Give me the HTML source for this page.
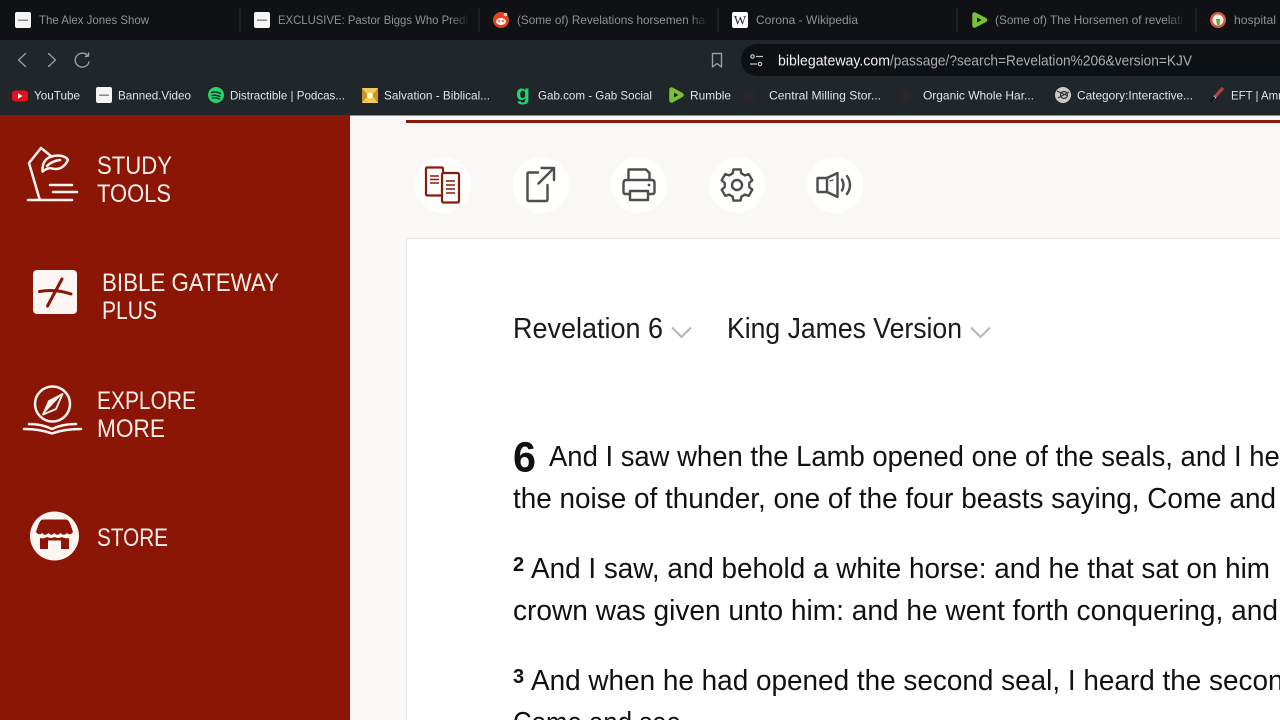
<!DOCTYPE html>
<html><head><meta charset="utf-8"><title>Revelation 6</title>
<style>
html,body{margin:0;padding:0;width:1280px;height:720px;overflow:hidden;background:#f9f8f6}
svg{display:block;position:absolute;left:0;top:0}
text{font-family:"Liberation Sans",sans-serif;white-space:pre}
.tab{font-size:12px;fill:#8f9194}
.bm{font-size:12px;fill:#e2e4e6}
.side{font-size:25px;fill:#fbeeea}
.sel{font-size:29px;fill:#1a1a1a}
.v{font-size:29px;fill:#111}
.ic{fill:none;stroke:#4d4d4d;stroke-width:2.4;stroke-linejoin:round;stroke-linecap:round}
.w{fill:none;stroke:#fdf3f0;stroke-width:2.5;stroke-linecap:round;stroke-linejoin:round}
</style></head>
<body>
<svg width="1280" height="720" viewBox="0 0 1280 720" xmlns="http://www.w3.org/2000/svg">
<defs>
<linearGradient id="f"><stop offset="0" stop-color="#0f1114" stop-opacity="0"/><stop offset="1" stop-color="#0f1114"/></linearGradient>
</defs>
<!-- chrome -->
<rect x="0" y="0" width="1280" height="40" fill="#0f1114"/>
<rect x="0" y="40" width="1280" height="75" fill="#202629"/>
<g stroke="#2b2e31" stroke-width="1">
<line x1="240" y1="8" x2="240" y2="32"/><line x1="479" y1="8" x2="479" y2="32"/><line x1="718" y1="8" x2="718" y2="32"/><line x1="957" y1="8" x2="957" y2="32"/><line x1="1196" y1="8" x2="1196" y2="32"/>
</g>
<!-- tab icons -->
<rect x="15" y="12" width="16" height="16" rx="2" fill="#f4f4f4"/><rect x="18" y="19.500" width="10" height="1.500" fill="#888"/>
<rect x="254" y="12" width="16" height="16" rx="2" fill="#f4f4f4"/><rect x="257" y="19.500" width="10" height="1.500" fill="#888"/>
<circle cx="501" cy="20" r="8" fill="#e0431f"/><path d="M495 27 L493.500 28 L497 26Z" fill="#e0431f"/><ellipse cx="501" cy="21.500" rx="5" ry="3.600" fill="#fbe9e4"/><circle cx="499" cy="21" r="0.900" fill="#e0431f"/><circle cx="503" cy="21" r="0.900" fill="#e0431f"/><circle cx="505.500" cy="14.500" r="1.800" fill="#f5c5b5"/>
<rect x="732" y="12" width="16" height="16" rx="2" fill="#fff"/>
<text x="740" y="24.500" text-anchor="middle" style="font-family:'Liberation Serif',serif;font-size:13px" fill="#222">W</text>
<path d="M974.500 14.500 L974.500 25.500 L985 20Z" fill="#79c034" stroke="#79c034" stroke-width="4.500" stroke-linejoin="round"/><path d="M977 17.500 L977 22.500 L981.500 20Z" fill="#0f1114"/>
<circle cx="1218" cy="20" r="8" fill="#d9573a"/><circle cx="1218" cy="20" r="5.500" fill="#f6efe8"/><path d="M1216 19 L1220 19 L1219.500 25 L1217 25Z" fill="#5fa94a"/>
<!-- tab text -->
<text class="tab" x="39" y="24" textLength="110" lengthAdjust="spacingAndGlyphs">The Alex Jones Show</text>
<text class="tab" x="278" y="24" textLength="190" lengthAdjust="spacingAndGlyphs">EXCLUSIVE: Pastor Biggs Who Predi</text>
<text class="tab" x="517" y="24" textLength="188" lengthAdjust="spacingAndGlyphs">(Some of) Revelations horsemen ha</text>
<text class="tab" x="756" y="24" textLength="102" lengthAdjust="spacingAndGlyphs">Corona - Wikipedia</text>
<text class="tab" x="995" y="24" textLength="188" lengthAdjust="spacingAndGlyphs">(Some of) The Horsemen of revelati</text>
<text class="tab" x="1234" y="24" textLength="42" lengthAdjust="spacingAndGlyphs">hospital</text>
<rect x="450" y="10" width="20" height="20" fill="url(#f)"/><rect x="688" y="10" width="20" height="20" fill="url(#f)"/><rect x="1166" y="10" width="20" height="20" fill="url(#f)"/>
<!-- nav -->
<g fill="none" stroke="#9a9fa2" stroke-width="1.400" stroke-linecap="round" stroke-linejoin="round">
<path d="M25.500 53.500 L18.500 60 L25.500 66.500"/>
<path d="M48.500 53.500 L55.500 60 L48.500 66.500"/>
<path d="M87.500 55.500 A7 7 0 1 0 89 62"/><path d="M85.500 56.500 L88.500 56 L88.500 53"/>
<path d="M712.500 53.500 H721.500 V67 L717 63.500 L712.500 67Z"/>
</g>
<!-- omnibox -->
<rect x="741" y="44" width="560" height="32" rx="16" fill="#0e1114"/>
<g fill="none" stroke="#c5c7c9" stroke-width="1.200">
<circle cx="752.500" cy="56.500" r="1.700"/><line x1="756" y1="56.500" x2="763" y2="56.500"/>
<circle cx="760" cy="64" r="1.700"/><line x1="750" y1="64" x2="757" y2="64"/>
</g>
<text x="778" y="65.500" fill="#f0f1f2" textLength="112" lengthAdjust="spacingAndGlyphs" style="font-size:14.500px">biblegateway.com</text>
<text x="890" y="65.500" fill="#a9adb0" textLength="302" lengthAdjust="spacingAndGlyphs" style="font-size:14.500px">/passage/?search=Revelation%206&amp;version=KJV</text>
<!-- bookmark icons -->
<rect x="12" y="90.500" width="16" height="11" rx="3" fill="#e3101a"/><path d="M18 93.300 L18 98.700 L22.500 96Z" fill="#fff"/>
<rect x="96" y="87" width="16" height="16" rx="2" fill="#f4f4f4"/><rect x="99" y="94.500" width="10" height="1.500" fill="#888"/>
<circle cx="216" cy="95" r="8" fill="#25d366"/><g fill="none" stroke="#123" stroke-width="1.300" stroke-linecap="round"><path d="M211.500 92.500 Q216 91 220.500 93.500"/><path d="M212 95.500 Q216 94.500 220 96.500"/><path d="M212.500 98 Q216 97.200 219.500 99"/></g>
<rect x="362" y="88" width="16" height="15" fill="#c9922a"/><path d="M362 88 L378 88 L372 95.500 L378 103 L362 103 L368 95.500Z" fill="#f0cb55"/><circle cx="370" cy="95.500" r="3" fill="#fff7d0"/>
<text x="516" y="100" style="font-size:21px;font-weight:bold" fill="#21d66f" textLength="14" lengthAdjust="spacingAndGlyphs">g</text>
<path d="M671.500 89.500 L671.500 100.500 L681.500 95Z" fill="#79c034" stroke="#79c034" stroke-width="4.500" stroke-linejoin="round"/><path d="M674 92.500 L674 97.500 L678.500 95Z" fill="#202629"/>
<circle cx="750" cy="96" r="6" fill="#2a2526"/><circle cx="905" cy="96" r="6" fill="#2a2526"/>
<circle cx="1063" cy="95" r="8" fill="#c9c9c9"/><g fill="none" stroke="#33383a" stroke-width="1.200"><path d="M1057 91 L1068 96"/><path d="M1058 98 L1069 92"/><circle cx="1064" cy="95" r="3.500"/></g>
<path d="M1211 101 L1222 89" stroke="#d8d8d8" stroke-width="3" stroke-linecap="round"/><path d="M1216 95.500 L1222 89" stroke="#b83a3a" stroke-width="3" stroke-linecap="round"/><path d="M1211 101 L1213.500 98" stroke="#111" stroke-width="3" stroke-linecap="round"/>
<!-- bookmark text -->
<text class="bm" x="34" y="99.500" textLength="46" lengthAdjust="spacingAndGlyphs">YouTube</text>
<text class="bm" x="118" y="99.500" textLength="73" lengthAdjust="spacingAndGlyphs">Banned.Video</text>
<text class="bm" x="230" y="99.500" textLength="115" lengthAdjust="spacingAndGlyphs">Distractible | Podcas...</text>
<text class="bm" x="384" y="99.500" textLength="106" lengthAdjust="spacingAndGlyphs">Salvation - Biblical...</text>
<text class="bm" x="538" y="99.500" textLength="114" lengthAdjust="spacingAndGlyphs">Gab.com - Gab Social</text>
<text class="bm" x="690" y="99.500" textLength="41" lengthAdjust="spacingAndGlyphs">Rumble</text>
<text class="bm" x="769" y="99.500" textLength="112" lengthAdjust="spacingAndGlyphs">Central Milling Stor...</text>
<text class="bm" x="923" y="99.500" textLength="111" lengthAdjust="spacingAndGlyphs">Organic Whole Har...</text>
<text class="bm" x="1077" y="99.500" textLength="116" lengthAdjust="spacingAndGlyphs">Category:Interactive...</text>
<text class="bm" x="1231" y="99.500" textLength="51" lengthAdjust="spacingAndGlyphs">EFT | Amr</text>
<!-- page -->
<rect x="0" y="115" width="1280" height="605" fill="#f9f8f6"/>
<rect x="350" y="115" width="930" height="1" fill="#8f8f8f"/>
<rect x="0" y="115" width="350" height="605" fill="#8b1605"/>
<rect x="406" y="120" width="874" height="3" fill="#8a1a0b"/>
<rect x="406.500" y="238.500" width="900" height="500" fill="#fff" stroke="#e4e4e2"/>
<!-- sidebar icons -->
<g class="w">
<path d="M28 200 H72"/><path d="M50 185 H72"/><path d="M53 192 H77"/>
<path d="M39.500 199 L29 163 L41 148 L51 156"/>
<path d="M42.500 171.500 Q41.500 156 58 155.500 Q66 156 68 160 Q62 172 50 168 Q45.500 169 42.500 171.500Z"/>
<path d="M47 166 Q52 161 60 160"/>
</g>
<rect x="33" y="270" width="44" height="44" rx="4" fill="#fdf6f3"/>
<path d="M39.500 291.500 Q55 288.500 71 294" fill="none" stroke="#8b1605" stroke-width="3" stroke-linecap="round"/>
<path d="M62 279 Q55 292 47.500 306" fill="none" stroke="#8b1605" stroke-width="3" stroke-linecap="round"/>
<circle cx="52.500" cy="404" r="17.500" class="w"/>
<path d="M62.500 394 L56 409 L43 414.500 L49 401Z" fill="none" stroke="#fdf3f0" stroke-width="1.800" stroke-linejoin="round"/>
<path d="M62.500 394 L43 414.500 L49 401Z" fill="#fdf3f0"/>
<g class="w">
<path d="M29 424 Q42 424 52 429 Q62 424 76 424"/>
<path d="M24 429 Q40 429 52 433.500 Q64 429 81 429"/>
</g>
<circle cx="54.500" cy="536" r="24.500" fill="#fdf6f3"/>
<path d="M43 519.500 H66 Q69 519.500 71 526 L73 532 Q70 536 67 533 Q63.500 536.500 60.500 533 Q57 536.500 54.500 533 Q51.500 536.500 48.500 533 Q45 536.500 42 533 Q39 536 36 532 L38 526 Q40 519.500 43 519.500Z" fill="#8b1605"/>
<path d="M40 538 Q44 539 47 537 Q51 539 54.500 537 Q58 539 62 537 Q65 539 69 538 V549 H61 V540.500 H48 V549 H40Z" fill="#8b1605"/>
<!-- sidebar text -->
<text class="side" x="97" y="174" textLength="75" lengthAdjust="spacingAndGlyphs">STUDY</text>
<text class="side" x="97" y="202" textLength="74" lengthAdjust="spacingAndGlyphs">TOOLS</text>
<text class="side" x="102" y="291" textLength="177" lengthAdjust="spacingAndGlyphs">BIBLE GATEWAY</text>
<text class="side" x="102" y="319" textLength="55" lengthAdjust="spacingAndGlyphs">PLUS</text>
<text class="side" x="97" y="409" textLength="99" lengthAdjust="spacingAndGlyphs">EXPLORE</text>
<text class="side" x="97" y="437" textLength="68" lengthAdjust="spacingAndGlyphs">MORE</text>
<text class="side" x="97" y="546" textLength="71" lengthAdjust="spacingAndGlyphs">STORE</text>
<!-- tool circles -->
<g fill="#fefefd"><circle cx="443" cy="185" r="28"/><circle cx="541" cy="185" r="28"/><circle cx="639" cy="185" r="28"/><circle cx="737" cy="185" r="28"/><circle cx="835" cy="185" r="28"/></g>
<!-- parallel icon -->
<g fill="none" stroke="#8a1a0b" stroke-width="2.200" stroke-linejoin="round">
<path d="M442 195.500 H427.500 Q426 195.500 426 194 V169 Q426 167.500 427.500 167.500 H442 Q443 167.500 443 169 V172.500"/>
<rect x="442" y="173" width="17" height="29.500" rx="1.500"/>
</g>
<g stroke="#8a1a0b" stroke-width="1.500">
<path d="M430 176 H439 M430 179.500 H439 M430 183 H439"/>
<path d="M446 181 H455 M446 185 H455 M446 189 H455 M446 193 H455"/>
</g>
<!-- share -->
<g class="ic">
<path d="M538 172.500 H529 Q527.500 172.500 527.500 174 V199.500 Q527.500 201 529 201 H546 Q547.500 201 547.500 199.500 V185"/>
<path d="M538.500 183.500 L553.500 168.500"/><path d="M541.500 168 H554 V180"/>
</g>
<!-- printer -->
<g class="ic">
<path d="M628.500 180 V169.500 H646 L649.500 173 V180"/>
<path d="M630 194 H625.500 Q623.500 194 623.500 192 V183 Q623.500 180 626.500 180 H651.500 Q654.500 180 654.500 183 V192 Q654.500 194 652.500 194 H648"/>
<path d="M630 191 H648 V200 H630Z"/>
</g>
<circle cx="649" cy="185" r="1.400" fill="#4d4d4d"/>
<!-- gear -->
<g class="ic" transform="translate(737,185)">
<path d="M-4.300 -11.700 L-3.600 -15.600 L3.600 -15.600 L4.300 -11.700 L7.980 -9.570 L11.710 -10.920 L15.310 -4.680 L12.280 -2.130 L12.280 2.120 L15.320 4.680 L11.710 10.920 L7.980 9.570 L4.300 11.700 L3.600 15.600 L-3.600 15.600 L-4.300 11.700 L-7.980 9.570 L-11.710 10.920 L-15.310 4.680 L-12.280 2.130 L-12.280 -2.120 L-15.320 -4.680 L-11.710 -10.920 L-7.980 -9.570Z"/>
<circle cx="0" cy="0" r="5"/>
</g>
<!-- speaker -->
<g class="ic">
<path d="M818 178 H827 L837.500 173 V197 L827 192 H818 Q817.500 192 817.500 191 V179 Q817.500 178 818 178Z"/>
<path d="M827 178 V192"/>
<path d="M830 181 L833 180" stroke-width="1.300"/>
<path d="M842 179.500 Q845 185 842 190.500"/>
<path d="M847 176 Q853 185 847 194"/>
</g>
<!-- selectors -->
<text class="sel" x="513" y="338" textLength="150" lengthAdjust="spacingAndGlyphs">Revelation 6</text>
<text class="sel" x="727" y="338" textLength="235" lengthAdjust="spacingAndGlyphs">King James Version</text>
<g fill="none" stroke="#b5b5b5" stroke-width="2"><path d="M672 327.500 L681.500 337 L691 327.500"/><path d="M971 327.500 L980.500 337 L990 327.500"/></g>
<!-- verses -->
<text x="513" y="471.500" fill="#111" style="font-size:43px;font-weight:bold" textLength="23" lengthAdjust="spacingAndGlyphs">6</text>
<text class="v" x="549" y="466" textLength="746" lengthAdjust="spacingAndGlyphs">And I saw when the Lamb opened one of the seals, and I hea</text>
<text class="v" x="513" y="508" textLength="763" lengthAdjust="spacingAndGlyphs">the noise of thunder, one of the four beasts saying, Come and</text>
<text x="513" y="571" fill="#111" style="font-size:20px;font-weight:bold">2</text>
<text class="v" x="531" y="578" textLength="739" lengthAdjust="spacingAndGlyphs">And I saw, and behold a white horse: and he that sat on him</text>
<text class="v" x="513" y="620" textLength="765" lengthAdjust="spacingAndGlyphs">crown was given unto him: and he went forth conquering, and</text>
<text x="513" y="683" fill="#111" style="font-size:20px;font-weight:bold">3</text>
<text class="v" x="531" y="690" textLength="768" lengthAdjust="spacingAndGlyphs">And when he had opened the second seal, I heard the second</text>
<text class="v" x="513" y="732" textLength="175" lengthAdjust="spacingAndGlyphs">Come and see.</text>
</svg>
</body></html>
